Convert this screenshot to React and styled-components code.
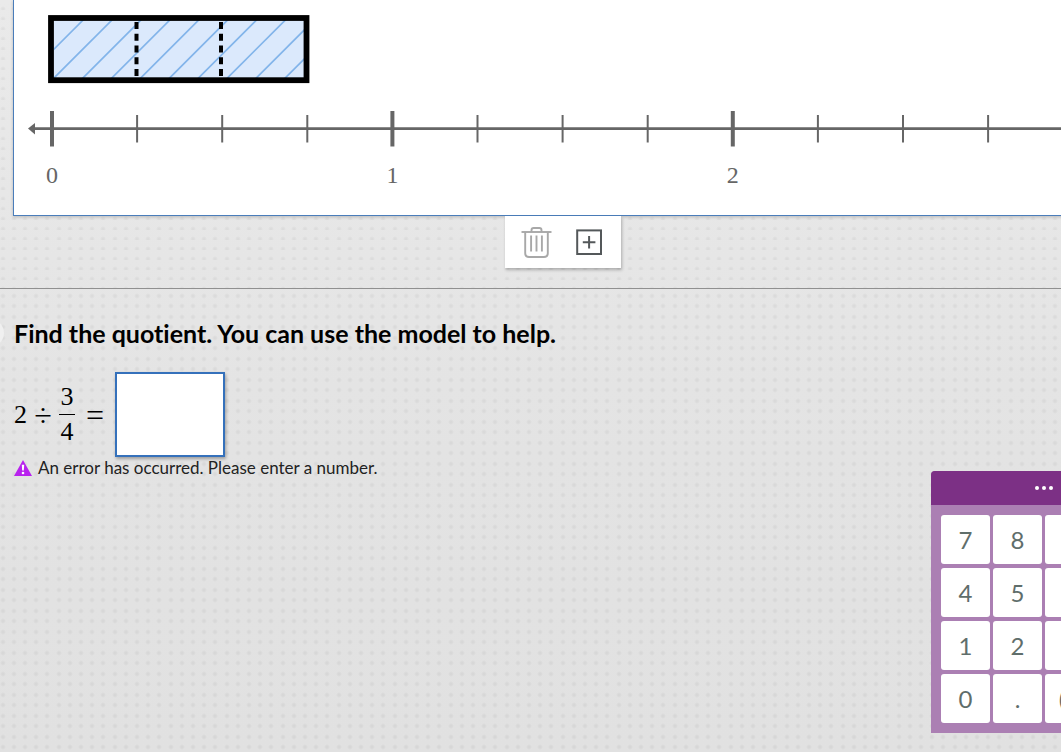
import React, { useState } from 'react'
import styled, { createGlobalStyle } from 'styled-components'

const TICK_GAP = 85.1
const ticks = Array.from({ length: 12 }, (_, i) => ({ x: 52 + i * TICK_GAP, major: i % 4 === 0, label: i / 4 }))
const hatches = Array.from({ length: 10 }, (_, i) => 54 + (i - 1) * 28.9)

const keys = ['7', '8', '9', '', '4', '5', '6', '', '1', '2', '3', '', '0', '.', '(-)', '']

// soft dots, five to a 56px wide tile
const dots = (rows) =>
  rows
    .flatMap((y) => [3, 14, 25, 36, 47].map((x) => `radial-gradient(circle at ${x}px ${y}px, rgba(0, 0, 0, 0.045) 1px, transparent 3px)`))
    .join(', ')

const App = () => {
  const [answer, setAnswer] = useState('')

  return (
    <Page>
      <GlobalStyle />
      <ModelArea>
        <ModelPanel>
          <NumberLine />
        </ModelPanel>
        <Toolbar>
          <ToolButton type="button" aria-label="Delete">
            <TrashIcon />
          </ToolButton>
          <ToolButton type="button" aria-label="Add">
            <AddIcon />
          </ToolButton>
        </Toolbar>
      </ModelArea>

      <Question>
        <ReadAloud type="button" aria-label="Read aloud" />
        <Prompt>Find the quotient. You can use the model to help.</Prompt>
        <Equation>
          <span>2</span>
          <Operator>÷</Operator>
          <Fraction>
            <Numerator>3</Numerator>
            <span>4</span>
          </Fraction>
          <Operator $wide>=</Operator>
          <Answer aria-label="Answer" value={answer} onChange={(e) => setAnswer(e.target.value)} />
        </Equation>
        <ErrorMessage>
          <WarningIcon />
          An error has occurred. Please enter a number.
        </ErrorMessage>
      </Question>

      <Keypad>
        <KeypadHeader>
          <Dot />
          <Dot />
          <Dot />
        </KeypadHeader>
        <Keys>
          {keys.map((key, i) => (
            <Key key={i} type="button" onClick={() => setAnswer(answer + key)}>
              {key}
            </Key>
          ))}
        </Keys>
      </Keypad>
    </Page>
  )
}

const NumberLine = () => (
  <Drawing width="1098" height="215" viewBox="14 0 1098 215">
    <defs>
      <clipPath id="bar">
        <rect x="54" y="20" width="250" height="58" />
      </clipPath>
    </defs>
    <rect x="51" y="18" width="255.5" height="62.2" fill="#dbe9fc" />
    <g clipPath="url(#bar)" stroke="#82b4ea" strokeWidth="1.7">
      {hatches.map((x) => (
        <line key={x} x1={x - 4} y1="82" x2={x + 62} y2="16" />
      ))}
    </g>
    <rect x="51" y="18" width="255.5" height="62.2" fill="none" stroke="#000" strokeWidth="5.8" />
    <g stroke="#000" strokeWidth="4" strokeDasharray="7 4.75">
      <line x1="136.5" y1="22" x2="136.5" y2="77" />
      <line x1="221" y1="22" x2="221" y2="77" />
    </g>
    <g stroke="#666">
      <line x1="33" y1="128.6" x2="1120" y2="128.6" strokeWidth="2.8" />
      {ticks.map(({ x, major }) => (
        <line key={x} x1={x} x2={x} y1={major ? 111 : 115} y2={major ? 146.5 : 142.5} strokeWidth={major ? 4 : 2} />
      ))}
    </g>
    <path d="M28 128.6 L35 123 V134.4 Z" fill="#666" />
    {ticks
      .filter((tick) => tick.major)
      .map(({ x, label }) => (
        <TickLabel key={x} x={x} y="183">
          {label}
        </TickLabel>
      ))}
  </Drawing>
)

const TrashIcon = () => (
  <svg width="32" height="32" viewBox="0 0 32 32" fill="none" stroke="#a8a8a8" strokeWidth="1.9">
    <path d="M0.5 6h30" />
    <path d="M10.5 6V4.2Q10.5 2 12.7 2h5.6Q20.5 2 20.5 4.2V6" />
    <path d="M4.2 6v21.2Q4.2 31 8 31h15Q26.8 31 26.8 27.2V6" />
    <path d="M10.1 9.5v16M15.5 9.5v16M20.9 9.5v16" />
  </svg>
)

const AddIcon = () => (
  <svg width="32" height="32" viewBox="0 0 32 32" fill="none" stroke="#54585a" strokeWidth="2">
    <rect x="4.2" y="4.4" width="23.8" height="23.6" />
    <path d="M9.8 16.3h12.6M16.1 10v12.4" />
  </svg>
)

const WarningIcon = () => (
  <svg width="18" height="16" viewBox="0 0 18 16">
    <path d="M9 0 L18 16 H0 Z" fill="#b822ee" />
    <path d="M7.8 4.8h2.4l-.4 5.6H8.2z" fill="#fff" />
    <circle cx="9" cy="13" r="1.3" fill="#fff" />
  </svg>
)

export default App

const GlobalStyle = createGlobalStyle`
  * {
    box-sizing: border-box;
  }

  body {
    margin: 0;
    font-family: Lato, sans-serif;
    font-variant-ligatures: none;
    color: #000;
    background: #e1e1e1;
  }
`

const Page = styled.main`
  position: relative;
  display: flex;
  flex-direction: column;
  min-height: 100vh;
  overflow: hidden;
  background: linear-gradient(#eaeaea, #e3e3e3 60%, #e1e1e1);
`

const ModelArea = styled.section`
  display: flex;
  flex-direction: column;
  align-items: center;
  width: calc(100% + 52px);
  padding: 0 0 20px 13px;
  border-bottom: 1px solid #909090;
  background-image: ${dots([9])};
  background-size: 56px 10px;
`

const ModelPanel = styled.div`
  width: 100%;
  overflow: hidden;
  background: #fff;
  border: 1px solid #4a7dba;
  border-top: 0;
  box-shadow: 0 1px 3px rgba(0, 0, 0, 0.2);
`

const Drawing = styled.svg`
  display: block;
`

const TickLabel = styled.text`
  font-family: "Liberation Serif", serif;
  font-size: 24px;
  text-anchor: middle;
  fill: #666;
`

const Toolbar = styled.div`
  display: flex;
  align-items: center;
  gap: 20px;
  height: 52px;
  padding: 0 16px;
  background: #fff;
  box-shadow: 1px 2px 3px rgba(0, 0, 0, 0.25);
`

const ToolButton = styled.button`
  display: flex;
  padding: 0;
  border: 0;
  background: none;
  cursor: pointer;
`

const Question = styled.section`
  position: relative;
  flex: 1;
  padding: 28px 14px;
  background-image: ${dots([7, 17])};
  background-size: 56px 21px;
`

const ReadAloud = styled.button`
  position: absolute;
  top: 30px;
  left: -24px;
  width: 28px;
  height: 28px;
  padding: 0;
  border: 0;
  border-radius: 50%;
  background: #f0f0f0;
`

const Prompt = styled.h1`
  margin: 0 0 23px;
  font-size: 25px;
  font-weight: 700;
  line-height: 32px;
`

const Equation = styled.div`
  display: flex;
  align-items: center;
  font-family: "Liberation Serif", serif;
  font-size: 26px;
  line-height: 34px;
`

const Operator = styled.span`
  width: ${(props) => (props.$wide ? '40px' : '32px')};
  font-size: 32px;
  text-align: center;
`

const Fraction = styled.span`
  display: flex;
  flex-direction: column;
  width: 16px;
  text-align: center;
`

const Numerator = styled.span`
  border-bottom: 1px solid #000;
`

const Answer = styled.input`
  width: 110px;
  height: 85px;
  padding: 0 8px;
  border: 2px solid #3571bb;
  border-radius: 0;
  background: #fff;
  box-shadow: 1px 2px 3px rgba(0, 0, 0, 0.3);
  font: inherit;
  text-align: center;
  outline: none;
`

const ErrorMessage = styled.p`
  display: flex;
  align-items: center;
  gap: 6px;
  margin: 0;
  color: #222;
  font-size: 17px;
  line-height: 22px;
`

const Keypad = styled.div`
  position: absolute;
  top: 471px;
  right: -95px;
  width: 225px;
  border-radius: 4px 4px 0 0;
  overflow: hidden;
  background: #ab7fb3;
`

const KeypadHeader = styled.div`
  display: flex;
  align-items: center;
  justify-content: center;
  gap: 3px;
  height: 34px;
  background: #7c3085;
`

const Dot = styled.span`
  width: 4px;
  height: 4px;
  border-radius: 50%;
  background: #fff;
`

const Keys = styled.div`
  display: grid;
  grid-template-columns: repeat(4, 1fr);
  gap: 4px 3px;
  padding: 10px;
`

const Key = styled.button`
  height: 49px;
  padding: 0;
  border: 0;
  border-radius: 3px;
  background: #fff;
  color: #5f6e6b;
  font-family: Lato, sans-serif;
  font-size: 24px;
  line-height: 32px;
  cursor: pointer;
`
